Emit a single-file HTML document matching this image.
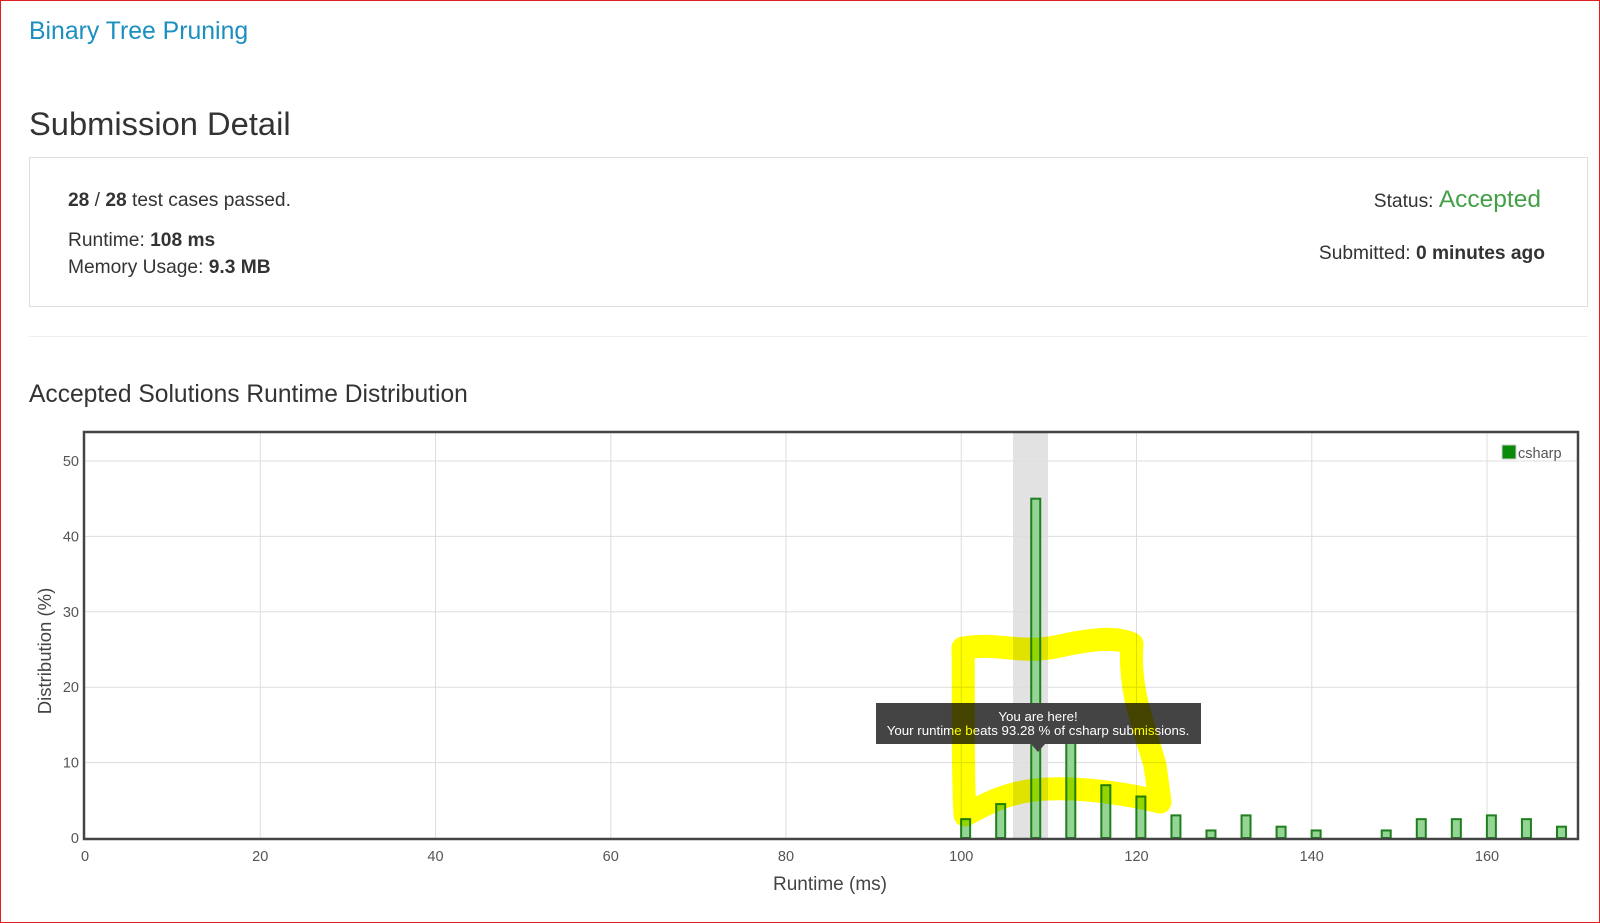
<!DOCTYPE html>
<html><head><meta charset="utf-8">
<style>
html,body{margin:0;padding:0;}
body{width:1600px;height:923px;position:relative;overflow:hidden;background:#fff;font-family:"Liberation Sans",Arial,sans-serif;color:#333;}
.frame{position:absolute;left:0;top:0;width:1598px;height:921px;border:1px solid #e02020;}
.abs{position:absolute;white-space:nowrap;}
</style></head><body>
<div class="frame"></div>
<div class="abs" style="left:29px;top:18px;font-size:24.8px;color:#1a8fc0;">Binary Tree Pruning</div>
<div class="abs" style="left:29px;top:105px;font-size:32.7px;color:#333;">Submission Detail</div>
<div class="abs" style="left:29px;top:157px;width:1557px;height:148px;border:1px solid #ddd;"></div>
<div class="abs" style="left:68px;top:190px;font-size:19.2px;"><b>28</b> / <b>28</b> test cases passed.</div>
<div class="abs" style="left:68px;top:230px;font-size:19.2px;">Runtime: <b>108 ms</b></div>
<div class="abs" style="left:68px;top:257px;font-size:19.2px;">Memory Usage: <b>9.3 MB</b></div>
<div class="abs" style="right:59px;top:186px;font-size:19.2px;">Status: <span style="color:#43a047;font-size:24.5px;">Accepted</span></div>
<div class="abs" style="right:55px;top:243px;font-size:19.2px;">Submitted: <b>0 minutes ago</b></div>
<div class="abs" style="left:29px;top:336px;width:1559px;height:1px;background:#eee;"></div>
<div class="abs" style="left:29px;top:381px;font-size:24.6px;color:#333;">Accepted Solutions Runtime Distribution</div>
<svg class="abs" style="left:0;top:0" width="1600" height="923" id="ch" font-family="Liberation Sans, Arial, sans-serif"></svg>
<script>
var s='',L=85,R=1577,T=433,B=838;
function X(m){return L+8.7625*m;} function Y(v){return B-7.54*v;}
s+='<rect x="1013" y="'+T+'" width="35" height="'+(B-T)+'" fill="#e2e2e2"/>';
for(var m=20;m<=160;m+=20)s+='<line x1="'+X(m)+'" y1="'+T+'" x2="'+X(m)+'" y2="'+B+'" stroke="#ddd" stroke-width="1"/>';
for(var v=10;v<=50;v+=10)s+='<line x1="'+L+'" y1="'+Y(v)+'" x2="'+R+'" y2="'+Y(v)+'" stroke="#ddd" stroke-width="1"/>';
for(var v=0;v<=50;v+=10)s+='<text x="79" y="'+(Y(v)+5)+'" text-anchor="end" font-size="14.5" fill="#555">'+v+'</text>';
for(var m=0;m<=160;m+=20)s+='<text x="'+X(m)+'" y="861" text-anchor="middle" font-size="14.5" fill="#555">'+m+'</text>';
var bars=[[100,2.5],[104,4.5],[108,45],[112,13],[116,7],[120,5.5],[124,3],[128,1],[132,3],[136,1.5],[140,1],[148,1],[152,2.5],[156,2.5],[160,3],[164,2.5],[168,1.5]];
bars.forEach(function(b){var cx=X(b[0]+0.5);s+='<rect x="'+(cx-4.5)+'" y="'+Y(b[1])+'" width="9" height="'+(B-Y(b[1]))+'" fill="#94d494" stroke="#1f7f1f" stroke-width="2"/>';});
s+='<rect x="'+(L-1)+'" y="'+(T-1)+'" width="'+(R-L+2)+'" height="'+(B-T+2)+'" fill="none" stroke="#444" stroke-width="2.5"/>';
s+='<rect x="1502" y="445" width="14" height="14" fill="#0a8a0a" stroke="#ccc" stroke-width="1"/><text x="1518" y="458" font-size="14.5" fill="#555">csharp</text>';
s+='<rect x="876" y="703" width="325" height="41" fill="#444"/><path d="M1031 744 L1038 752 L1045 744 Z" fill="#444"/>';
s+='<text x="1038" y="721" text-anchor="middle" font-size="13.3" fill="#fff">You are here!</text><text x="1038" y="735" text-anchor="middle" font-size="13.3" fill="#fff">Your runtime beats 93.28 % of csharp submissions.</text>';
s+='<path d="M963 648 C1000 642,1020 655,1060 646 S1120 638,1132 644 C1128 690,1145 730,1155 765 L1160 802 C1120 792,1070 786,1035 790 S980 808,965 815 C962 760,964 700,963 648 Z" fill="none" stroke="#ffff00" stroke-width="23" stroke-linejoin="round" style="mix-blend-mode:multiply"/>';
s+='<text transform="translate(51 651) rotate(-90)" text-anchor="middle" font-size="18.5" fill="#444">Distribution (%)</text>';
s+='<text x="830" y="890" text-anchor="middle" font-size="19" fill="#444">Runtime (ms)</text>';
document.getElementById('ch').innerHTML=s;
</script>
</body></html>
